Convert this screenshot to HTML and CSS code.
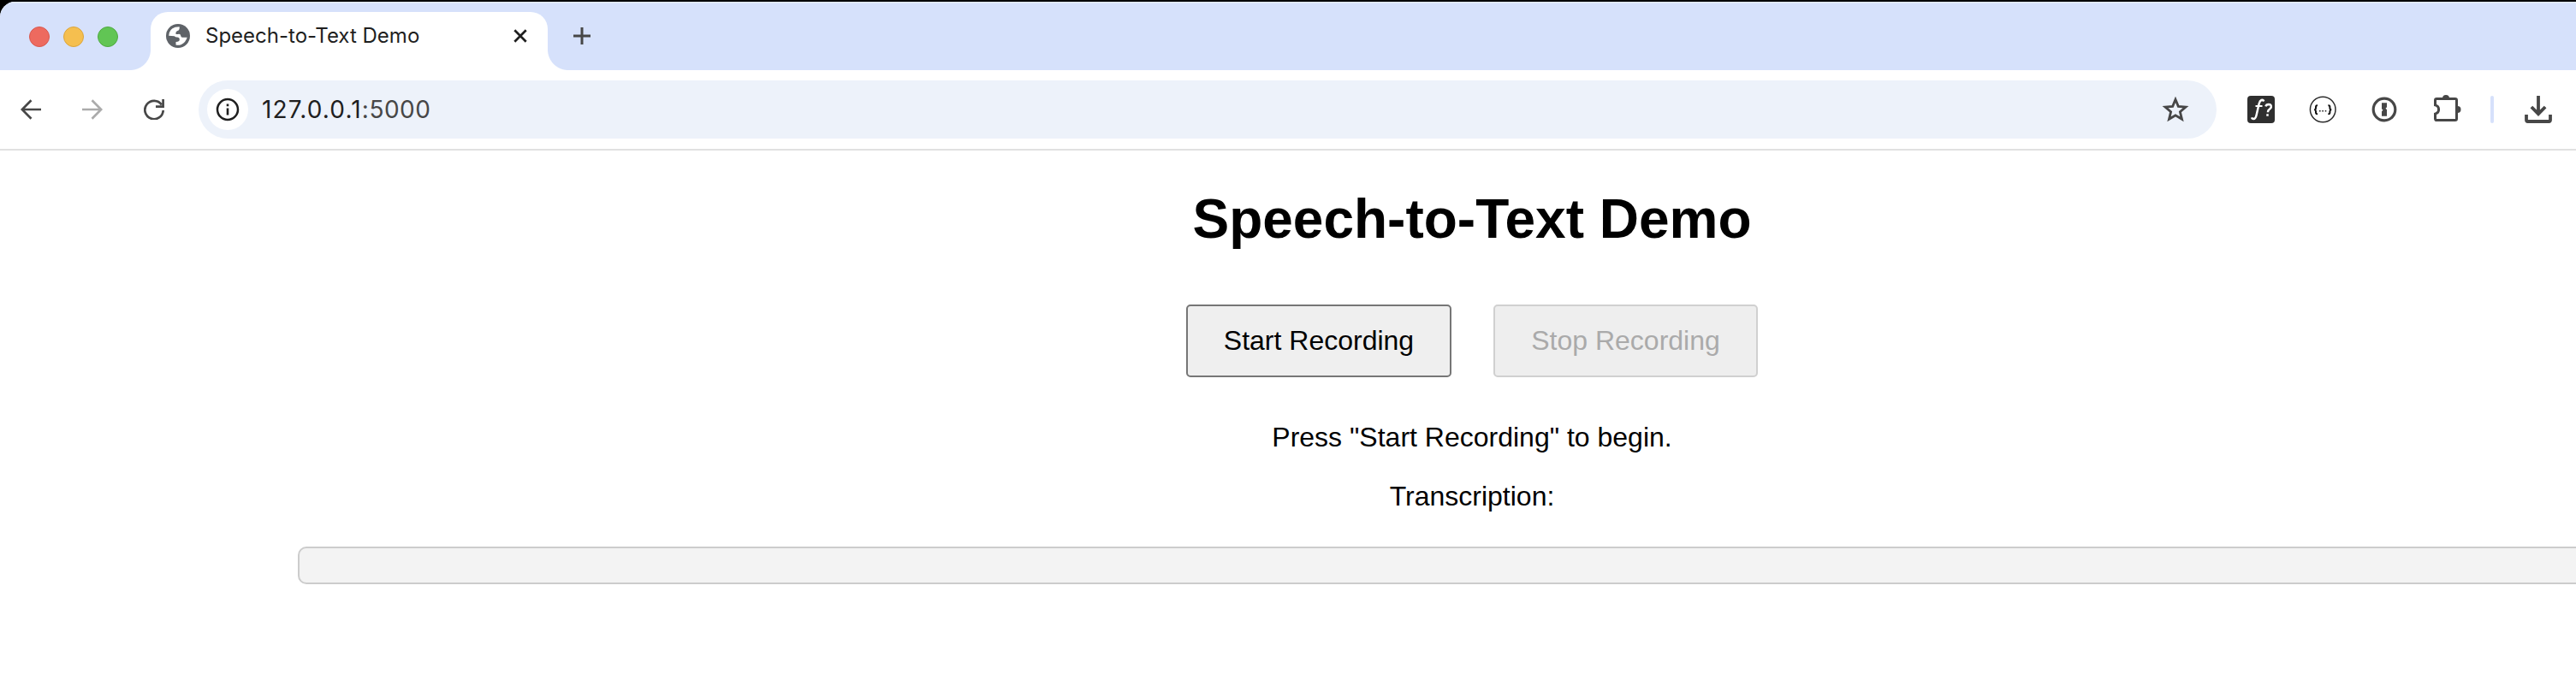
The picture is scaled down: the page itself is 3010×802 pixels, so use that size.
FILE: index.html
```html
<!DOCTYPE html>
<html lang="en">
<head>
<meta charset="utf-8">
<title>Speech-to-Text Demo</title>
<link rel="stylesheet" href="styles.css">
</head>
<body>
<div class="window">
  <header class="tabstrip">
    <div class="lights"><i class="light red"></i><i class="light yellow"></i><i class="light green"></i></div>
    <div class="tab">
      <svg class="globe" width="28" height="28" viewBox="0 0 28 28"><circle cx="14" cy="14" r="14" fill="#5f6368"/><path d="M15.7 3.3V5.2Q15.7 7.6 13 8.3Q11.3 8.8 11.3 11.7Q13.2 12 15.3 11.8Q17.4 12 17.3 14.2Q17.8 16 20 15.8H24.7Q23 21.5 18 24Q15 25.3 11.5 24.6V21Q15.8 20.8 15.8 18.2Q15.8 15.7 13 15.5Q11 15.6 9.8 14.2L3.2 13.8Q3.3 6 10.8 3.7Z" fill="#fff"/></svg>
      <span class="tab-title">Speech-to-Text Demo</span>
      <svg class="close" width="16" height="16" viewBox="0 0 16 16"><path d="M1.3 1.3 14.7 14.7M14.7 1.3 1.3 14.7" fill="none" stroke="#1f1f1f" stroke-width="2.7"/></svg>
    </div>
    <svg class="new-tab" width="20" height="20" viewBox="0 0 20 20"><path d="M10 0V20M0 10H20" fill="none" stroke="#474747" stroke-width="3"/></svg>
  </header>
  <nav class="toolbar">
    <div class="nav-icons">
      <svg width="24" height="24" viewBox="0 0 24 24"><path d="M24 12H2.2M12.5 1.2 1.8 12 12.5 22.8" fill="none" stroke="#474747" stroke-width="2.7"/></svg>
      <svg width="24" height="24" viewBox="0 0 24 24"><path d="M0 12H21.8M11.5 1.2 22.2 12 11.5 22.8" fill="none" stroke="#ababab" stroke-width="2.7"/></svg>
      <svg width="24" height="24" viewBox="0 0 24 24"><path d="M20.8 6.4A10.7 10.7 0 1 0 22.7 13M14 8.6H22.6V0" fill="none" stroke="#474747" stroke-width="2.7"/></svg>
    </div>
    <div class="address">
      <span class="info"><svg width="28" height="28" viewBox="0 0 28 28"><circle cx="14" cy="14" r="12" fill="none" stroke="#1f1f1f" stroke-width="2.5"/><path d="M14 12.4V20.6M14 7.6V10.2" stroke="#1f1f1f" stroke-width="2.6"/></svg></span>
      <span class="url">127.0.0.1<span class="port">:5000</span></span>
      <svg class="star" width="32" height="30" viewBox="0 0 32 30"><path d="M16 3.3 19.3 11.4 28 12.1 21.4 17.8 23.5 26.3 16 21.8 8.5 26.3 10.6 17.8 4 12.1 12.7 11.4Z" fill="none" stroke="#474747" stroke-width="2.8"/></svg>
    </div>
    <div class="extensions">
      <svg width="32" height="32" viewBox="0 0 32 32"><rect width="32" height="32" rx="4" fill="#2f2f2f"/><g fill="none" stroke="#fff"><path d="M19.3 6.4Q18.4 4.4 16.4 5Q14.6 5.8 13.7 9L10.6 22.5Q9.6 27.2 7 27Q5.4 26.8 5 25.4" stroke-width="2.5"/><path d="M9.5 12H17.5" stroke-width="1.9"/><path d="M21.4 12.4Q22 9.9 24.8 9.9Q28 10 27.8 13Q27.6 14.7 25.8 15.8Q24 17 23.9 19.2M23.5 21.2V23.8" stroke-width="2.5"/></g></svg>
      <svg width="32" height="32" viewBox="0 0 32 32"><circle cx="16.2" cy="16" r="14.8" fill="#fff" stroke="#2d2d2d" stroke-width="1.5"/><g fill="none" stroke="#111" stroke-width="2"><path d="M10 11.4Q8 11 8 13V14.4Q8 16 6.3 16.3Q8 16.6 8 18.2V19.6Q8 21.5 10 21.1M22.4 11.4Q24.4 11 24.4 13V14.4Q24.4 16 26.1 16.3Q24.4 16.6 24.4 18.2V19.6Q24.4 21.5 22.4 21.1"/></g><path d="M12 17h1.6v1.6h-1.6zM15.3 17h1.6v1.6h-1.6zM18.7 17h1.6v1.6h-1.6z" fill="#222"/></svg>
      <svg width="32" height="32" viewBox="0 0 32 32"><circle cx="16" cy="16" r="12.8" fill="none" stroke="#474747" stroke-width="3.2"/><path d="M13 8.2H19V13.2L17.5 14.7 19 16.2V23.8H13V18.3L14.5 16.8 13 15.3Z" fill="#474747"/></svg>
      <svg class="puzzle" width="32" height="34" viewBox="0 0 32 34"><path d="M3.2 5.5H24.8Q26.5 5.5 26.5 7.2V28.8Q26.5 30.5 24.8 30.5H3.2Q1.5 30.5 1.5 28.8V23.1Q5.6 22 5.6 18T1.5 12.9V7.2Q1.5 5.5 3.2 5.5Z" fill="none" stroke="#474747" stroke-width="3"/><path d="M10 5A4 4 0 0 1 18 5ZM27.5 14A4 4 0 0 1 27.5 22Z" fill="#474747"/></svg>
      <i class="separator"></i>
      <svg width="32" height="32" viewBox="0 0 32 32"><path d="M16 0V21M7.9 13 16 21.2 24.1 13M2 22V28.3Q2 30 3.7 30H28.3Q30 30 30 28.3V22" fill="none" stroke="#474747" stroke-width="3.8"/></svg>
    </div>
  </nav>
  <main class="page">
    <h1 class="title">Speech-to-Text Demo</h1>
    <div class="buttons">
      <button class="btn start">Start Recording</button>
      <button class="btn" disabled>Stop Recording</button>
    </div>
    <p class="text">Press "Start Recording" to begin.</p>
    <p class="text">Transcription:</p>
    <div class="output"></div>
  </main>
</div>
</body>
</html>
```
FILE: styles.css
```css
* { box-sizing: border-box; }
body { margin: 0; background: #000; overflow: hidden; }
svg { display: block; flex: none; }
.window {
  width: 3010px;
  height: 800px;
  margin-top: 2px;
  background: #fff;
  border-top-left-radius: 18px;
  overflow: hidden;
}
.tabstrip {
  display: flex;
  height: 80px;
  padding-top: 12px;
  background: #d6e1fb;
  box-shadow: inset 0 2px 0 #e0e8fc;
}
.lights { display: flex; gap: 16px; width: 176px; padding: 17px 0 0 34px; }
.light { width: 24px; height: 24px; border-radius: 50%; border: 1px solid; }
.red { background: #ed6a5f; border-color: #d9584e; }
.yellow { background: #f5bf4f; border-color: #dba53c; }
.green { background: #61c554; border-color: #4faa40; }
.tab {
  position: relative;
  display: flex;
  width: 464px;
  height: 68px;
  padding: 14px 24px 0 18px;
  background: #fff;
  border-radius: 20px 20px 0 0;
}
.tab::before, .tab::after {
  content: "";
  position: absolute;
  bottom: 0;
  width: 24px;
  height: 24px;
}
.tab::before { left: -24px; background: radial-gradient(circle at 0 0, transparent 23.5px, #fff 24.5px); }
.tab::after { right: -24px; background: radial-gradient(circle at 100% 0, transparent 23.5px, #fff 24.5px); }
.tab-title {
  flex: 1;
  margin-left: 18px;
  font: 24px/28px Inter, sans-serif;
  color: #1f1f1f;
  white-space: nowrap;
}
.close { margin-top: 6px; }
.new-tab { margin: 18px 0 0 30px; }
.toolbar {
  display: flex;
  align-items: center;
  height: 94px;
  border-bottom: 2px solid #e1e1e1;
}
.nav-icons { display: flex; gap: 48px; width: 232px; padding-left: 24px; }
.address {
  display: flex;
  align-items: center;
  width: 2358px;
  height: 68px;
  padding: 0 32px 0 10px;
  border-radius: 34px;
  background: #edf2fa;
}
.info {
  display: grid;
  place-items: center;
  width: 48px;
  height: 48px;
  border-radius: 50%;
  background: #fff;
}
.url {
  flex: 1;
  margin-left: 16px;
  font: 28px/34px Inter, sans-serif;
  letter-spacing: 1.15px;
  color: #1f1f1f;
}
.port { color: #474747; letter-spacing: 0.5px; }
.extensions { display: flex; align-items: center; gap: 40px; padding-left: 36px; }
.puzzle { margin: -2px 0 0 2px; }
.separator { width: 4px; height: 32px; margin: 0 -4px 0 -6px; border-radius: 2px; background: #d6e1fb; }
.page {
  display: flex;
  flex-direction: column;
  align-items: center;
  width: 3440px;
  font-family: "Liberation Sans", Arial, sans-serif;
  color: #000;
}
.title { margin: 43px 0 0; font-size: 64px; line-height: 74px; }
.buttons { display: flex; gap: 49px; margin-top: 63px; }
.btn {
  width: 309px;
  height: 85px;
  padding: 0;
  border: 2px solid #767676;
  border-radius: 5px;
  background: #efefef;
  font: 32px/37px "Liberation Sans", Arial, sans-serif;
  color: #000;
}
.start { width: 310px; }
.btn:disabled { border-color: #d0d0d0; background: #eee; color: #aaa; }
.text { margin: 0; font-size: 32px; line-height: 37px; }
.buttons + .text { margin-top: 52px; }
.text + .text { margin-top: 32px; }
.output {
  width: 2744px;
  height: 44px;
  margin-top: 40px;
  border: 2px solid #ccc;
  border-radius: 10px;
  background: #f3f3f3;
}
```
